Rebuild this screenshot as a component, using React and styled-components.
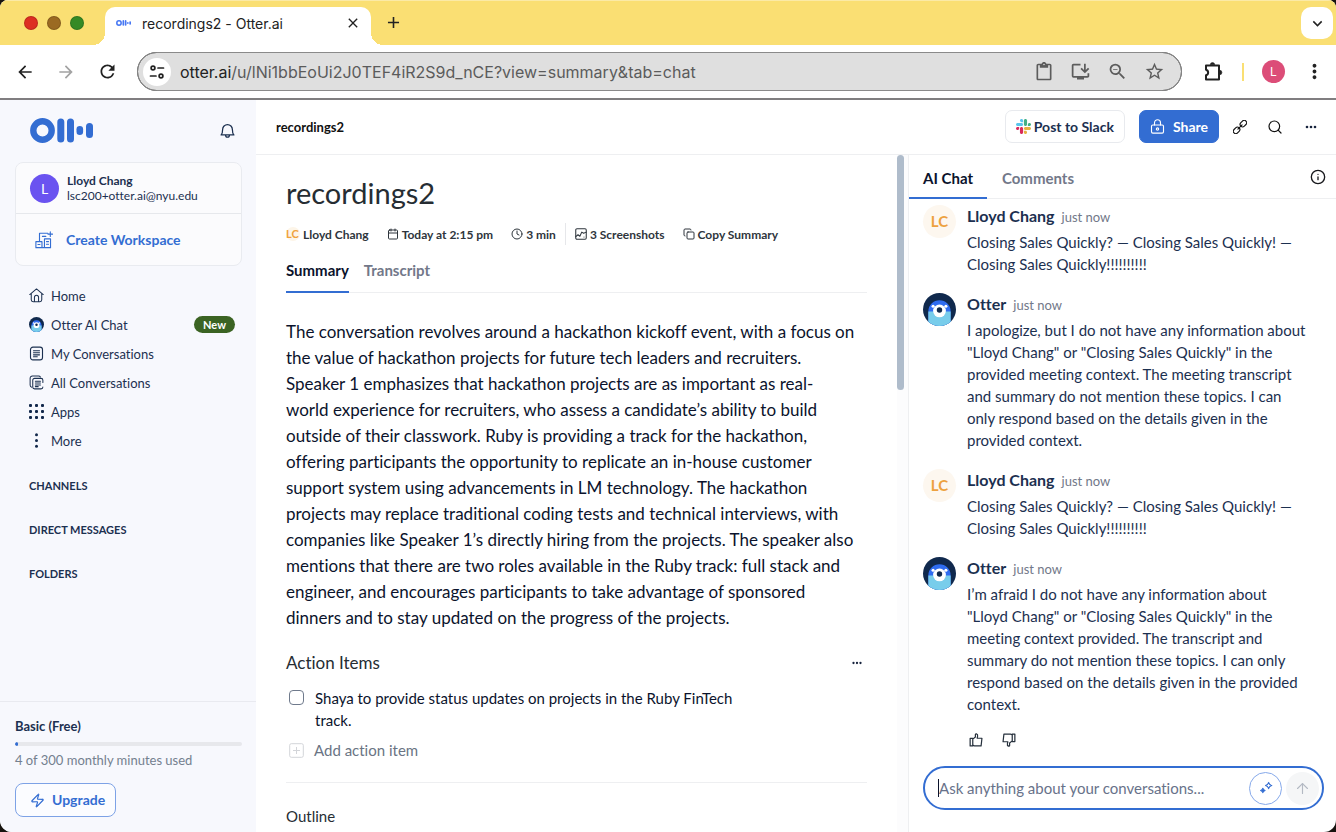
import React from "react";
import styled, { createGlobalStyle, css } from "styled-components";
import {
  MdArrowBack, MdArrowForward, MdRefresh, MdContentPaste, MdZoomOut, MdStarBorder,
  MdMoreVert, MdClose, MdAdd, MdKeyboardArrowDown, MdOutlineInstallDesktop,
} from "react-icons/md";
import { Search, Info, Calendar, Clock, Copy, Zap, ArrowUp } from "lucide-react";

const c = {
  yellow: "#fadf73",
  blue: "#336dd2",
  navy: "#1c3050",
  ink: "#0b132c",
  gray: "#727889",
  line: "#eeeff1",
  side: "#f7f8fd",
};

const GlobalStyle = createGlobalStyle`
  * { box-sizing: border-box; }
  html, body { margin: 0; background: #17130f; }
  body {
    font-family: Lato, "Open Sans", sans-serif;
    font-size: 14px;
    font-variant-ligatures: none;
    color: ${c.navy};
  }
  button, input { font: inherit; font-variant-ligatures: none; color: inherit; }
  h1, h2, h3, p, ul { margin: 0; padding: 0; font-weight: 400; }
  ul { list-style: none; }
  a { color: inherit; text-decoration: none; }
  svg { display: block; flex: none; }
`;

/* ---------- browser window ---------- */

const Window = styled.div`
  height: 100vh;
  display: flex;
  flex-direction: column;
  overflow: hidden;
  background: #fff;
  border-radius: 8px 8px 12px 12px;
`;

const TabStrip = styled.div`
  flex: none;
  height: 45px;
  display: flex;
  align-items: flex-end;
  padding: 0 3px 0 24px;
  background: ${c.yellow};
  border-top: 1px solid #fbeaa6;
  font-family: Inter, sans-serif;
  color: #222;
`;

const Lights = styled.div`
  display: flex;
  gap: 9px;
  padding-bottom: 15px;
  margin-right: 21px;
`;

const Light = styled.span`
  width: 14px;
  height: 14px;
  border-radius: 50%;
  background: ${(p) => p.$color};
  border: 1px solid rgba(0, 0, 0, 0.15);
`;

const BrowserTab = styled.div`
  position: relative;
  width: 266px;
  height: 38px;
  display: flex;
  align-items: center;
  padding: 0 10px 6px 11px;
  background: #fff;
  border-radius: 10px 10px 0 0;
  font-size: 14px;
  &::before, &::after {
    content: "";
    position: absolute;
    bottom: 0;
    width: 12px;
    height: 12px;
  }
  &::before { left: -12px; background: radial-gradient(circle at 0 0, transparent 12px, #fff 12px); }
  &::after { right: -12px; background: radial-gradient(circle at 100% 0, transparent 12px, #fff 12px); }
`;

const TabTitle = styled.span`
  flex: 1;
  margin-left: 11px;
`;

const BareButton = styled.button`
  display: flex;
  align-items: center;
  justify-content: center;
  padding: 0;
  border: 0;
  background: none;
  color: ${(p) => p.$color || "inherit"};
`;

const NewTab = styled(BareButton)`
  margin: 0 auto 13px 13px;
`;

const TabMenu = styled(BareButton)`
  width: 32px;
  height: 32px;
  margin-bottom: 6px;
  background: #fff;
  border-radius: 10px;
`;

const Toolbar = styled.div`
  flex: none;
  height: 55px;
  display: flex;
  align-items: center;
  padding: 0 10px 0 15px;
  border-bottom: 2px solid #807e80;
  color: #222;
`;

const NavButtons = styled.div`
  display: flex;
  gap: 21px;
  margin-right: 19px;
`;

const AddressBar = styled.form`
  flex: 1;
  height: 39px;
  display: flex;
  align-items: center;
  gap: 16px;
  padding: 0 16px 0 5px;
  border: 1px solid #4b4b4b;
  border-radius: 20px;
  background: #dfdfdf;
  color: #5c5c5c;
  outline: 1px solid #8a8a8a;
  outline-offset: -1px;
`;

const SiteInfo = styled(BareButton)`
  width: 28px;
  height: 28px;
  border-radius: 50%;
  background: #fff;
  color: #222;
`;

const UrlField = styled.div`
  flex: 1;
  margin-left: -7px;
  font-family: Inter, sans-serif;
  font-size: 16px;
  color: #5b5b5b;
  b { font-weight: 400; color: #222; }
`;

const ToolbarEnd = styled.div`
  display: flex;
  align-items: center;
  margin-left: 20px;
  gap: 18px;
`;

const YellowBar = styled.span`
  width: 2px;
  height: 18px;
  background: ${c.yellow};
`;

const Profile = styled.span`
  width: 23px;
  height: 23px;
  border-radius: 50%;
  background: #dc4d78;
  color: #fff;
  font: 12px/23px Inter, sans-serif;
  text-align: center;
`;

/* ---------- page frame ---------- */

const Page = styled.div`
  flex: 1;
  min-height: 0;
  display: flex;
`;

const Sidebar = styled.aside`
  flex: none;
  width: 256px;
  display: flex;
  flex-direction: column;
  background: ${c.side};
`;

const Brand = styled.div`
  display: flex;
  justify-content: space-between;
  align-items: center;
  padding: 18px 20px 19px 30px;
`;

const AccountCard = styled.section`
  margin: 0 14px 0 15px;
  border: 1px solid #e9ebf0;
  border-radius: 8px;
  background: #fbfbfd;
`;

const Account = styled.div`
  display: flex;
  align-items: center;
  gap: 8px;
  height: 51px;
  padding-left: 14px;
  border-bottom: 1px solid #e6e8ec;
  font-size: 12px;
  line-height: 15px;
`;

const AccountAvatar = styled.span`
  width: 29px;
  height: 29px;
  border-radius: 50%;
  background: #6a53f0;
  color: #fff;
  font-size: 14px;
  line-height: 29px;
  text-align: center;
`;

const CreateWorkspace = styled.a`
  display: flex;
  align-items: center;
  gap: 13px;
  height: 51px;
  padding-left: 19px;
  color: ${c.blue};
  font-size: 14px;
  font-weight: 700;
`;

const NavList = styled.ul`
  padding: 15px 21px 9px 29px;
`;

const NavLink = styled.a`
  display: flex;
  align-items: center;
  gap: 7px;
  height: 29px;
  font-size: 13px;
`;

const NewBadge = styled.span`
  margin-left: auto;
  padding: 0 9px;
  border-radius: 9px;
  background: #3b6323;
  color: #fff;
  font-size: 11px;
  font-weight: 700;
  line-height: 17px;
`;

const SectionTitle = styled.h2`
  padding-left: 29px;
  font-size: 11px;
  font-weight: 700;
  line-height: 44px;
`;

const Plan = styled.div`
  margin-top: auto;
  padding: 15px 14px 15px 15px;
  border-top: 1px solid #e9eaf0;
  font-size: 13px;
  line-height: 18px;
  color: #74808f;
`;

const PlanName = styled.div`
  font-weight: 700;
  color: ${c.navy};
`;

const Meter = styled.div`
  height: 4px;
  margin: 7px 0 5px;
  border-radius: 2px;
  background: #e7e8ec;
  overflow: hidden;
  &::before {
    content: "";
    display: block;
    width: 3px;
    height: 4px;
    border-radius: 2px;
    background: ${c.blue};
  }
`;

const Upgrade = styled.button`
  display: flex;
  align-items: center;
  gap: 7px;
  height: 34px;
  margin-top: 14px;
  padding: 0 10px 0 14px;
  border: 1px solid #7da2e6;
  border-radius: 8px;
  background: #fbfcff;
  color: ${c.blue};
  font-size: 14px;
  font-weight: 700;
`;

const Main = styled.div`
  flex: 1;
  min-width: 0;
  display: flex;
  flex-direction: column;
`;

const PageHeader = styled.header`
  flex: none;
  display: flex;
  align-items: center;
  height: 55px;
  padding: 0 17px 1px 20px;
  border-bottom: 1px solid ${c.line};
  color: #111;
`;

const FileName = styled.span`
  flex: 1;
  font-size: 13px;
  font-weight: 700;
`;

const PillButton = styled.button`
  display: flex;
  align-items: center;
  height: 33px;
  margin-right: 14px;
  border: 1px solid ${(p) => (p.$primary ? c.blue : "#e8eaee")};
  border-radius: 7px;
  background: ${(p) => (p.$primary ? c.blue : "#fff")};
  color: ${(p) => (p.$primary ? "#fff" : c.navy)};
  gap: ${(p) => (p.$primary ? 8 : 3)}px;
  padding: 0 10px;
  font-size: 14px;
  font-weight: 700;
`;

const HeaderIcons = styled.div`
  display: flex;
  gap: 20px;
`;

const Columns = styled.div`
  flex: 1;
  min-height: 0;
  display: flex;
`;

/* ---------- summary column ---------- */

const Article = styled.main`
  flex: 1;
  min-width: 0;
  overflow: hidden;
  padding: 18px 30px 0 30px;
  color: ${c.ink};
`;

const Title = styled.h1`
  font-size: 29px;
  line-height: 40px;
  color: #262d33;
`;

const Meta = styled.div`
  display: flex;
  align-items: center;
  gap: 18px;
  height: 22px;
  margin-top: 10px;
  font-size: 12px;
  font-weight: 700;
  color: #2e353c;
`;

const MetaItem = styled.span`
  display: flex;
  align-items: center;
  gap: 3px;
  white-space: nowrap;
`;

const MetaDivider = styled.span`
  width: 1px;
  height: 22px;
  margin: 0 -9px;
  background: #e6e7ea;
`;

const SpeakerMark = styled.span`
  width: 14px;
  height: 14px;
  border-radius: 50%;
  background: #fdf5e8;
  color: #f0a23b;
  font-size: 11px;
  line-height: 14px;
`;

const TabRow = styled.div`
  display: flex;
  height: ${(p) => p.$height}px;
  gap: ${(p) => p.$gap}px;
  border-bottom: 1px solid ${c.line};
`;

const Tab = styled.button`
  padding: 4px ${(p) => p.$pad || 0}px 0;
  margin-bottom: -1px;
  border: 0;
  border-bottom: 2px solid ${(p) => (p.$on ? c.blue : "transparent")};
  background: none;
  color: ${(p) => (p.$on ? c.ink : c.gray)};
  font-size: 15px;
  font-weight: 700;
`;

const Summary = styled.p`
  margin: 26px 0 20px;
  font-size: 17px;
  line-height: 26px;
  white-space: pre-line;
`;

const BlockHead = styled.div`
  display: flex;
  justify-content: space-between;
  align-items: center;
  height: 24px;
  padding-right: 3px;
`;

const BlockTitle = styled.h3`
  font-size: ${(p) => (p.$small ? 15 : 17)}px;
  line-height: 24px;
  color: #262d33;
`;

const Todo = styled.label`
  display: flex;
  gap: 11px;
  margin: 12px 0 0 3px;
  font-size: 15px;
  line-height: 22px;
  white-space: pre-line;
`;

const Tick = styled.input`
  appearance: none;
  flex: none;
  width: 15px;
  height: 15px;
  margin: 3px 0 0;
  border: 1px solid #6f7a8c;
  border-radius: 4px;
  background: #fff;
`;

const AddItem = styled.button`
  display: flex;
  align-items: center;
  gap: 10px;
  margin: 8px 0 21px 3px;
  padding: 0;
  border: 0;
  background: none;
  color: #6a7484;
  font-size: 15px;
  line-height: 22px;
`;

const Rule = styled.hr`
  height: 1px;
  margin: 0 0 21px;
  border: 0;
  background: ${c.line};
`;

const ScrollTrack = styled.div`
  flex: none;
  width: 11px;
  background: #fcfcfd;
  &::before {
    content: "";
    display: block;
    width: 7px;
    height: 235px;
    border-radius: 4px;
    background: #afbccb;
  }
`;

/* ---------- chat column ---------- */

const Chat = styled.section`
  flex: none;
  width: 428px;
  display: flex;
  flex-direction: column;
  border-left: 1px solid ${c.line};
`;

const ChatTabs = styled(TabRow)`
  flex: none;
  padding-right: 10px;
`;

const InfoButton = styled(BareButton)`
  margin-left: auto;
`;

const Messages = styled.div`
  flex: 1;
  display: flex;
  flex-direction: column;
  gap: 18px;
  padding: 6px 0 0 14px;
`;

const Message = styled.article`
  display: flex;
  gap: 11px;
`;

const MessageBody = styled.div`
  font-size: 15px;
  line-height: 22px;
  white-space: pre-line;
`;

const Byline = styled.div`
  height: 22px;
  margin-bottom: 4px;
  b { font-size: 16px; font-weight: 700; margin-right: 7px; }
  span { font-size: 13px; color: ${c.gray}; }
`;

const Initials = styled.span`
  flex: none;
  width: 33px;
  height: 33px;
  border-radius: 50%;
  background: #fdf7ef;
  color: #eda13f;
  font-size: 15px;
  font-weight: 700;
  line-height: 33px;
  text-align: center;
`;

const Feedback = styled.div`
  display: flex;
  gap: 19px;
  padding-left: 46px;
  color: #26303c;
`;

const Composer = styled.form`
  display: flex;
  align-items: center;
  gap: 4px;
  height: 44px;
  margin: 0 12px 22px 14px;
  padding: 0 3px 0 13px;
  border: 2px solid ${c.blue};
  border-radius: 22px;
  background: #fff;
`;

const Caret = styled.span`
  width: 1px;
  height: 18px;
  margin-right: -4px;
  background: ${c.ink};
`;

const Prompt = styled.input`
  flex: 1;
  min-width: 0;
  padding: 0;
  border: 0;
  outline: 0;
  background: none;
  font-size: 15px;
  &::placeholder { color: #68728a; opacity: 1; }
`;

const RoundButton = styled(BareButton)`
  flex: none;
  width: 33px;
  height: 33px;
  border-radius: 50%;
  ${(p) =>
    p.$outlined
      ? css`border: 1px solid #86a9ea; color: ${c.blue};`
      : css`background: #f5f6f7; color: #b3b9c3;`}
`;

/* ---------- drawings ---------- */

const OtterLogo = ({ width, color }) => (
  <svg width={width} height={(width * 25) / 63} viewBox="0 0 63 25" fill={color}>
    <circle cx="12.5" cy="12.5" r="9.2" fill="none" stroke={color} strokeWidth="6.4" />
    <rect x="27.3" y="0.5" width="7" height="24" rx="3.5" />
    <rect x="37" y="0.5" width="7" height="24" rx="3.5" />
    <rect x="46.5" y="8" width="6.6" height="9" rx="3.3" />
    <rect x="56" y="5" width="7" height="15" rx="3.5" />
  </svg>
);

const OtterFace = ({ size }) => (
  <svg width={size} height={size} viewBox="0 0 34 34">
    <clipPath id={`face${size}`}><circle cx="17" cy="17" r="17" /></clipPath>
    <g clipPath={`url(#face${size})`}>
      <rect width="34" height="34" fill="#10294d" />
      <path d="M5.5 34V19a11.5 11.5 0 0 1 23 0v15z" fill="#2f6cf0" />
      <path d="M5.5 19h23v15h-23z" fill="#78cdeb" />
      <circle cx="17" cy="18.5" r="6.6" fill="#fff" />
      <circle cx="17" cy="17.6" r="2.8" fill="#10294d" />
      <circle cx="10.4" cy="13.6" r="1.6" fill="#fff" />
      <circle cx="23.6" cy="13.6" r="1.6" fill="#fff" />
    </g>
  </svg>
);

const SlackMark = () => (
  <svg width="15" height="15" viewBox="0 0 122.8 122.8">
    {["#5bc5ec", "#43b084", "#e7b142", "#d92b5c"].map((fill, i) => (
      <path
        key={fill}
        fill={fill}
        transform={`rotate(${i * 90} 61.4 61.4)`}
        d="M45.2 25.8c-7.1 0-12.9-5.8-12.9-12.9S38.1 0 45.2 0s12.9 5.8 12.9 12.9v12.9zM45.2 32.3c7.1 0 12.9 5.8 12.9 12.9s-5.8 12.9-12.9 12.9H12.9C5.8 58.1 0 52.3 0 45.2s5.8-12.9 12.9-12.9z"
      />
    ))}
  </svg>
);

const Stroke = ({ size = 16, width = 1.2, children }) => (
  <svg width={size} height={size} viewBox="0 0 16 16" fill="none" stroke="currentColor" strokeWidth={width} strokeLinecap="round" strokeLinejoin="round">
    {children}
  </svg>
);

const TuneIcon = () => (
  <Stroke size={16} width={1.7}>
    <circle cx="4" cy="4" r="1.9" /><path d="M9 4h5.500M1.500 12H7" /><circle cx="12" cy="12" r="1.9" />
  </Stroke>
);
const PuzzleIcon = () => (
  <svg width="22" height="22" viewBox="0 0 22 22" fill="none" stroke="currentColor" strokeWidth="2" strokeLinejoin="round">
    <path d="M4 4.500h13v14H4v-4.200a2.900 2.900 0 0 0 0-5.600z" />
    <path d="M8.300 3.800a2.200 2.200 0 0 1 4.400 0zM17.700 9.300a2.200 2.200 0 0 1 0 4.400z" fill="currentColor" strokeWidth="0.6" />
  </svg>
);
const BellIcon = () => (
  <Stroke size={17} width={1.2}>
    <path d="M2 12.200c1.200-1.200 1.400-2.600 1.400-5.200a4.600 4.600 0 0 1 9.200 0c0 2.600.2 4 1.400 5.200zM6.200 12.400a1.800 1.800 0 0 0 3.600 0" />
  </Stroke>
);
const WorkspaceIcon = () => (
  <Stroke size={18} width={1}>
    <path d="M.8 9.400h5.400v5.400H.8zM4 9.400V2h7.400M8.400 7h5.400v7.800H8.400zM6.200 14.800h2.200M2.600 12h1.800M6.600 4.800h3M10.200 9.400h1.800M10.200 11.800h1.800M13.600.8v4M11.600 2.800h4" />
  </Stroke>
);
const HomeIcon = () => (
  <Stroke size={15} width={1.1}>
    <path d="M.8 7 8 1l7.200 6M2.400 6v6.600a2 2 0 0 0 2 2h7.200a2 2 0 0 0 2-2V6M5.800 14.400V10a2.200 2.200 0 0 1 4.400 0v4.400" />
  </Stroke>
);
const NoteIcon = () => (
  <Stroke size={15} width={1.2}>
    <rect x="1.6" y="1.2" width="12.8" height="13.6" rx="2.6" /><path d="M4.800 5h6.400M4.800 7.200h6.400M4.800 9.400h6.400M4.800 11.400h4" />
  </Stroke>
);
const NotesIcon = () => (
  <Stroke size={15} width={1.1}>
    <path d="M3 13a2.400 2.400 0 0 1-1.800-2.400V3.400A2.400 2.400 0 0 1 3.600 1h6.600a2.400 2.400 0 0 1 2 1.200" />
    <path d="M14.800 8V5.600a2 2 0 0 0-2-2H6a2 2 0 0 0-2 2v7.200a2 2 0 0 0 2 2h6.800a2 2 0 0 0 2-2M6.800 6.600h5.400M6.800 8.600h5.400M6.800 10.600h5.400M6.800 12.400h3" />
  </Stroke>
);
const AppsIcon = () => (
  <svg width="15" height="15" viewBox="0 0 15 15" fill="#12284b">
    {[0, 6, 12].map((y) => [0, 6, 12].map((x) => <rect key={`${x}-${y}`} x={x} y={y} width="3" height="3" rx="1" />))}
  </svg>
);
const MoreIcon = () => (
  <svg width="15" height="15" viewBox="0 0 15 15" fill="#12284b">
    <circle cx="7.5" cy="1.7" r="1.5" /><circle cx="7.5" cy="7.5" r="1.5" /><circle cx="7.5" cy="13.3" r="1.5" />
  </svg>
);
const DotsIcon = ({ size }) => (
  <svg width={size} height={size} viewBox="0 0 16 16" fill="#17233d">
    <circle cx="4" cy="8" r="1.3" /><circle cx="8" cy="8" r="1.3" /><circle cx="12" cy="8" r="1.3" />
  </svg>
);
const LockIcon = () => (
  <Stroke size={15} width={1.2}>
    <rect x="1.6" y="6.4" width="12.8" height="8.6" rx="1.4" /><path d="M4.800 6.400V4a3.200 3.200 0 0 1 6.400 0v2.400" /><circle cx="8" cy="10.6" r="1.2" />
  </Stroke>
);
const LinkIcon = () => (
  <Stroke size={14} width={1.3}>
    <g transform="rotate(-45 8 8)">
      <rect x="-1.6" y="5.2" width="8.2" height="5.6" rx="2.8" />
      <rect x="9.4" y="5.2" width="8.2" height="5.6" rx="2.8" />
      <path d="M4.600 8h6.800" />
    </g>
  </Stroke>
);
const PictureIcon = () => (
  <Stroke size={12} width={1.4}>
    <rect x="1" y="1" width="14" height="14" rx="1.6" />
    <path d="M1 11.500l3-2.500 2.500 2 2.500-5.500 2.500 1.500L15 5.500M12 12v0" />
  </Stroke>
);
const ThumbIcon = ({ down }) => (
  <Stroke size={14} width={1.400}>
    <g transform={down ? "rotate(180 8 8)" : undefined}>
      <path d="M1.300 6.200h3v8.600h-3zM4.300 7l3-2.400V1.800c0-.6.6-1 1.200-.8 1.200.4 1.600 1.600 1.300 2.800l-.5 2.200h5.500l-1 8.800H6.500l-2.200-1" />
    </g>
  </Stroke>
);
const PlusBoxIcon = () => (
  <svg width="15" height="15" viewBox="0 0 15 15" fill="none" stroke="#d3d5d9">
    <rect x="0.7" y="0.7" width="13.6" height="13.6" rx="1.6" /><path d="M7.500 4v7M4 7.500h7" />
  </svg>
);
const SparkIcon = () => (
  <Stroke size={14} width={1.2}>
    <path d="M11 1.600c.5 2.300 1.200 3 3.600 3.600-2.400.6-3.100 1.300-3.600 3.600-.5-2.300-1.200-3-3.600-3.600 2.400-.6 3.100-1.300 3.600-3.600z" />
    <path fill="currentColor" d="M4.400 8.200c.4 1.700.9 2.200 2.600 2.600-1.700.4-2.200.9-2.600 2.600-.4-1.700-.9-2.200-2.600-2.600 1.700-.4 2.200-.9 2.600-2.600z" />
  </Stroke>
);

/* ---------- content ---------- */

const NAV = [
  { label: "Home", icon: <HomeIcon /> },
  { label: "Otter AI Chat", icon: <OtterFace size={15} />, badge: "New" },
  { label: "My Conversations", icon: <NoteIcon /> },
  { label: "All Conversations", icon: <NotesIcon /> },
  { label: "Apps", icon: <AppsIcon /> },
  { label: "More", icon: <MoreIcon /> },
];

const SUMMARY = `The conversation revolves around a hackathon kickoff event, with a focus on
the value of hackathon projects for future tech leaders and recruiters.
Speaker 1 emphasizes that hackathon projects are as important as real-
world experience for recruiters, who assess a candidate’s ability to build
outside of their classwork. Ruby is providing a track for the hackathon,
offering participants the opportunity to replicate an in-house customer
support system using advancements in LM technology. The hackathon
projects may replace traditional coding tests and technical interviews, with
companies like Speaker 1’s directly hiring from the projects. The speaker also
mentions that there are two roles available in the Ruby track: full stack and
engineer, and encourages participants to take advantage of sponsored
dinners and to stay updated on the progress of the projects.`;

const QUESTION = `Closing Sales Quickly? — Closing Sales Quickly! —
Closing Sales Quickly!!!!!!!!!!`;

const MESSAGES = [
  { from: "Lloyd Chang", text: QUESTION },
  {
    from: "Otter",
    text: `I apologize, but I do not have any information about
"Lloyd Chang" or "Closing Sales Quickly" in the
provided meeting context. The meeting transcript
and summary do not mention these topics. I can
only respond based on the details given in the
provided context.`,
  },
  { from: "Lloyd Chang", text: QUESTION },
  {
    from: "Otter",
    text: `I’m afraid I do not have any information about
"Lloyd Chang" or "Closing Sales Quickly" in the
meeting context provided. The transcript and
summary do not mention these topics. I can only
respond based on the details given in the provided
context.`,
  },
];

export default function App() {
  return (
    <>
      <GlobalStyle />
      <Window>
        <TabStrip>
          <Lights>
            <Light $color="#dd2e22" /><Light $color="#9b6a22" /><Light $color="#358a25" />
          </Lights>
          <BrowserTab>
            <OtterLogo width={15} color="#4576f3" />
            <TabTitle>recordings2 - Otter.ai</TabTitle>
            <BareButton aria-label="Close tab"><MdClose size={16} /></BareButton>
          </BrowserTab>
          <NewTab aria-label="New tab"><MdAdd size={19} /></NewTab>
          <TabMenu aria-label="Search tabs"><MdKeyboardArrowDown size={19} /></TabMenu>
        </TabStrip>

        <Toolbar>
          <NavButtons>
            <BareButton aria-label="Back"><MdArrowBack size={20} /></BareButton>
            <BareButton aria-label="Forward" $color="#a3a3a3"><MdArrowForward size={20} /></BareButton>
            <BareButton aria-label="Reload"><MdRefresh size={21} /></BareButton>
          </NavButtons>
          <AddressBar>
            <SiteInfo type="button" aria-label="Site information"><TuneIcon /></SiteInfo>
            <UrlField><b>otter.ai</b>/u/lNi1bbEoUi2J0TEF4iR2S9d_nCE?view=summary&amp;tab=chat</UrlField>
            <BareButton type="button" aria-label="Clipboard"><MdContentPaste size={20} /></BareButton>
            <BareButton type="button" aria-label="Install"><MdOutlineInstallDesktop size={21} /></BareButton>
            <BareButton type="button" aria-label="Zoom"><MdZoomOut size={21} /></BareButton>
            <BareButton type="button" aria-label="Bookmark"><MdStarBorder size={21} /></BareButton>
          </AddressBar>
          <ToolbarEnd>
            <BareButton aria-label="Extensions"><PuzzleIcon /></BareButton>
            <YellowBar />
            <Profile>L</Profile>
            <BareButton aria-label="Browser menu"><MdMoreVert size={23} /></BareButton>
          </ToolbarEnd>
        </Toolbar>

        <Page>
          <Sidebar>
            <Brand>
              <OtterLogo width={63} color={c.blue} />
              <BareButton aria-label="Notifications"><BellIcon /></BareButton>
            </Brand>
            <AccountCard>
              <Account>
                <AccountAvatar>L</AccountAvatar>
                <div>
                  <b>Lloyd Chang</b>
                  <div>lsc200+otter.ai@nyu.edu</div>
                </div>
              </Account>
              <CreateWorkspace href="#workspace"><WorkspaceIcon />Create Workspace</CreateWorkspace>
            </AccountCard>
            <nav>
              <NavList>
                {NAV.map((n) => (
                  <li key={n.label}>
                    <NavLink href="#nav">{n.icon}{n.label}{n.badge && <NewBadge>{n.badge}</NewBadge>}</NavLink>
                  </li>
                ))}
              </NavList>
            </nav>
            {["CHANNELS", "DIRECT MESSAGES", "FOLDERS"].map((s) => <SectionTitle key={s}>{s}</SectionTitle>)}
            <Plan>
              <PlanName>Basic (Free)</PlanName>
              <Meter />
              4 of 300 monthly minutes used
              <Upgrade><Zap size={15} />Upgrade</Upgrade>
            </Plan>
          </Sidebar>

          <Main>
            <PageHeader>
              <FileName>recordings2</FileName>
              <PillButton><SlackMark />Post to Slack</PillButton>
              <PillButton $primary><LockIcon />Share</PillButton>
              <HeaderIcons>
                <BareButton aria-label="Copy link"><LinkIcon /></BareButton>
                <BareButton aria-label="Search"><Search size={16} strokeWidth={1.8} /></BareButton>
                <BareButton aria-label="More"><DotsIcon size={16} /></BareButton>
              </HeaderIcons>
            </PageHeader>

            <Columns>
              <Article>
                <Title>recordings2</Title>
                <Meta>
                  <MetaItem><SpeakerMark>LC</SpeakerMark>Lloyd Chang</MetaItem>
                  <MetaItem><Calendar size={12} />Today at 2:15 pm</MetaItem>
                  <MetaItem><Clock size={12} />3 min</MetaItem>
                  <MetaDivider />
                  <MetaItem><PictureIcon />3 Screenshots</MetaItem>
                  <MetaItem><Copy size={12} />Copy Summary</MetaItem>
                </Meta>
                <TabRow $height={48} $gap={15}>
                  <Tab $on>Summary</Tab>
                  <Tab>Transcript</Tab>
                </TabRow>
                <Summary>{SUMMARY}</Summary>
                <BlockHead>
                  <BlockTitle>Action Items</BlockTitle>
                  <BareButton aria-label="Action item options"><DotsIcon size={14} /></BareButton>
                </BlockHead>
                <Todo>
                  <Tick type="checkbox" />
                  {"Shaya to provide status updates on projects in the Ruby FinTech\ntrack."}
                </Todo>
                <AddItem><PlusBoxIcon />Add action item</AddItem>
                <Rule />
                <BlockTitle $small>Outline</BlockTitle>
              </Article>
              <ScrollTrack />

              <Chat>
                <ChatTabs $height={44} $gap={1}>
                  <Tab $on $pad={14}>AI Chat</Tab>
                  <Tab $pad={14}>Comments</Tab>
                  <InfoButton aria-label="Information" $color="#17181c"><Info size={16} /></InfoButton>
                </ChatTabs>
                <Messages>
                  {MESSAGES.map((m, i) => (
                    <Message key={i}>
                      {m.from === "Otter" ? <OtterFace size={33} /> : <Initials>LC</Initials>}
                      <MessageBody>
                        <Byline><b>{m.from}</b><span>just now</span></Byline>
                        <p>{m.text}</p>
                      </MessageBody>
                    </Message>
                  ))}
                  <Feedback>
                    <BareButton aria-label="Good response"><ThumbIcon /></BareButton>
                    <BareButton aria-label="Bad response"><ThumbIcon down /></BareButton>
                  </Feedback>
                </Messages>
                <Composer>
                  <Caret />
                  <Prompt aria-label="Ask Otter" placeholder="Ask anything about your conversations..." />
                  <RoundButton type="button" $outlined aria-label="Suggestions"><SparkIcon /></RoundButton>
                  <RoundButton type="submit" aria-label="Send"><ArrowUp size={17} strokeWidth={1.6} /></RoundButton>
                </Composer>
              </Chat>
            </Columns>
          </Main>
        </Page>
      </Window>
    </>
  );
}
